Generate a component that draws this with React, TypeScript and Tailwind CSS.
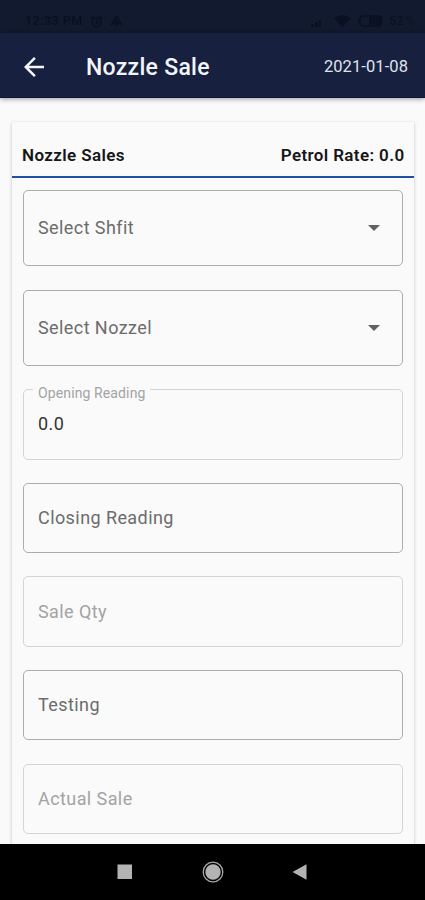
import clsx from "clsx";

interface FieldProps {
    label: string;
    value?: string;
    className?: string;
    disabled?: boolean;
    dropdown?: boolean;
}

function Field({ label, value, className, disabled, dropdown }: FieldProps) {
    return (
        <div
            className={clsx(
                "relative flex items-center justify-between rounded-[5px] border pl-[14px] pr-[22px] text-[18px] leading-[22px] tracking-[0.42px]",
                disabled ? "border-[#d4d4d4] text-[#a3a3a3]" : "border-[#acacac] text-[#6c6c6c]",
                className
            )}
        >
            {value ? (
                <>
                    <span className="absolute -top-[5px] left-[9px] bg-[#fafafa] pl-[5px] pr-[5px] text-[14px] leading-[16px] tracking-[0.12px] whitespace-nowrap">
                        {label}
                    </span>
                    <span className="text-[#333333]">{value}</span>
                </>
            ) : (
                <span>{label}</span>
            )}
            {dropdown && (
                <svg width="12" height="6" viewBox="0 0 12 6" className="fill-[#616161]">
                    <path d="M0 0h12L6 6z" />
                </svg>
            )}
        </div>
    );
}

function StatusBar() {
    return (
        <div className="flex h-[33px] shrink-0 items-center justify-between bg-[#111a2e] pt-[9px] pl-[25px] pr-[10px] text-[12.5px] text-[#091021]">
            <div className="flex items-center gap-[7px]">
                <span className="font-medium tracking-[0.5px]">12:33 PM</span>
                {/* Alarm */}
                <svg width="13" height="13" viewBox="0 0 13 13" fill="none" stroke="currentColor" strokeWidth="1.5">
                    <circle cx="6.5" cy="7.2" r="4.5" />
                    <path d="M6.5 4.5v3l2 1M1 3.5L3.7 1M12 3.5L9.3 1" />
                </svg>
                <svg width="13" height="12" viewBox="0 0 13 12" fill="none" stroke="currentColor" strokeWidth="1.6">
                    <path d="M1 10.5L6.5 1.5l5.5 9M3.5 8.5h6M6.5 5v6" />
                </svg>
            </div>
            <div className="flex items-center">
                {/* Signal */}
                <svg width="15" height="12" viewBox="0 0 15 12" className="mr-[8px] fill-current">
                    <path d="M0 9h3v3H0zM4 7h3v5H4zM8 5h2v7H8z" />
                </svg>
                {/* Wifi */}
                <svg width="17" height="12" viewBox="0 0 17 12" className="mr-[7px] fill-current">
                    <path d="M8.5 12L0 3.5C5 -1 12 -1 17 3.5z" />
                </svg>
                {/* Battery */}
                <svg width="26" height="12" viewBox="0 0 26 12" className="mr-[5px]">
                    <rect x="2" y="1" width="22" height="10" rx="3" fill="none" stroke="currentColor" strokeWidth="1.3" />
                    <rect x="11" y="2" width="12" height="8" fill="currentColor" />
                    <path d="M0 4h2v4H0z" fill="currentColor" />
                </svg>
                <span className="tracking-[0.3px]">52</span>
                <span className="ml-[2px] opacity-60">%</span>
            </div>
        </div>
    );
}

function AppBar() {
    return (
        <div className="relative z-10 flex h-[65px] shrink-0 items-center border-b border-[#0f1440] bg-[#17213f] pt-[3px] pl-[24px] pr-[17px] shadow-[0_1px_5px_rgba(0,0,0,0.4)]">
            <svg width="20" height="20" viewBox="4 4 16 16" className="fill-[#f4f6fa]">
                <path d="M20 11H7.83l5.59-5.59L12 4l-8 8 8 8 1.41-1.41L7.83 13H20v-2z" />
            </svg>
            <span className="ml-[42px] pt-[2px] text-[23px] leading-[28px] font-medium tracking-[0.28px] text-[#f2f4f8]">
                Nozzle Sale
            </span>
            <span className="ml-auto pt-[1px] text-[16.5px] leading-[20px] tracking-[0.08px] text-[#dfe3ee]">2021-01-08</span>
        </div>
    );
}

function NavBar() {
    return (
        <div className="flex h-[56px] shrink-0 items-center bg-black pl-[117px]">
            <svg width="16" height="16" viewBox="0 0 16 16">
                <rect x="0.5" y="0.5" width="14.5" height="14.5" fill="#b3b3b3" />
            </svg>
            <svg width="22" height="22" viewBox="0 0 22 22" className="ml-[69px]">
                <circle cx="11" cy="11" r="9.8" fill="none" stroke="#a8a8a8" strokeWidth="1.3" />
                <circle cx="11" cy="11" r="7.7" fill="#b3b3b3" />
            </svg>
            <svg width="15" height="16" viewBox="0 0 15 16" className="ml-[68px] fill-[#b3b3b3]">
                <path d="M14.5 0.3v15.4L0.5 8z" />
            </svg>
        </div>
    );
}

export default function App() {
    return (
        <div className="flex h-[900px] w-[425px] flex-col overflow-hidden bg-[#fafafa] font-['Roboto',sans-serif]">
            <StatusBar />
            <AppBar />

            <div className="min-h-0 flex-1 overflow-hidden pt-[24px] pl-[12px] pr-[11px]">
                <div className="h-[760px] bg-[#fafafa] shadow-[0_1px_3px_rgba(0,0,0,0.24)]">
                    <div className="flex h-[56px] items-end justify-between border-b-2 border-[#2150a5] pr-[9.5px] pb-[10px] pl-[10px] text-[17px] leading-[22px] font-semibold tracking-[0.38px] text-[#161616]">
                        <span>Nozzle Sales</span>
                        <span>Petrol Rate: 0.0</span>
                    </div>

                    <div className="pt-[12px] pr-[11px] pl-[11px]">
                        <Field label="Select Shfit" dropdown className="h-[76px]" />
                        <Field label="Select Nozzel" dropdown className="mt-[24px] h-[76px] pb-[1px]" />
                        <Field label="Opening Reading" value="0.0" disabled className="mt-[23px] h-[71px] pb-[2px]" />
                        <Field label="Closing Reading" className="mt-[23px] h-[70px]" />
                        <Field label="Sale Qty" disabled className="mt-[23px] h-[71px]" />
                        <Field label="Testing" className="mt-[23px] h-[70px]" />
                        <Field label="Actual Sale" disabled className="mt-[24px] h-[70px]" />
                    </div>
                </div>
            </div>

            <NavBar />
        </div>
    );
}
